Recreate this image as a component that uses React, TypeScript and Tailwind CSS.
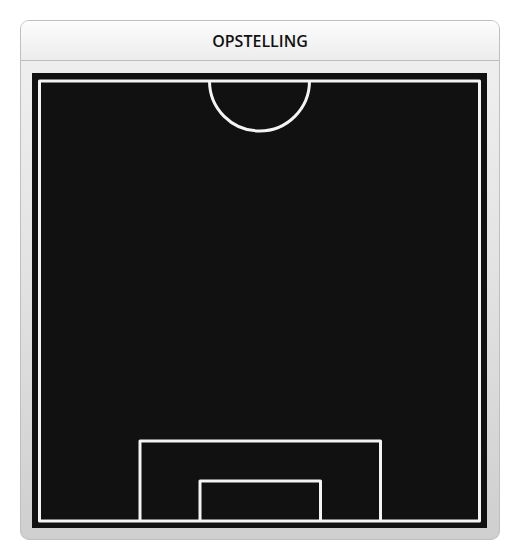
import React from 'react';

function Pitch() {
  return (
    <svg width="455" height="455" viewBox="0 0 455 455" className="block">
      <g fill="none" stroke="#f4f4f4" strokeWidth="3" strokeLinejoin="round">
        {/* outer lines */}
        <rect x="7.5" y="8" width="440" height="440" />
        {/* centre circle, lower half */}
        <path d="M177.5 8 A50 50 0 0 0 277.5 8" />
        {/* penalty area */}
        <path d="M108 448 V368 H348.5 V448" />
        {/* goal area */}
        <path d="M168 448 V408 H288.5 V448" />
      </g>
    </svg>
  );
}

export default function App() {
  return (
    <div className="w-[520px] h-[560px] bg-white pt-5 pl-5" style={{ fontFamily: '"Open Sans", "Liberation Sans", sans-serif' }}>
      <div className="w-[480px] h-[520px] rounded-[9px] border border-[#bfbfbf] overflow-hidden flex flex-col bg-gradient-to-b from-[#f1f1f1] via-[#e2e2e2] to-[#cfcfcf]">
        <div className="h-[40px] shrink-0 flex items-center justify-center border-b border-[#bcbcbc] bg-gradient-to-b from-[#fdfdfd] to-[#ececec]">
          <span className="text-[16px] font-semibold text-[#111] pt-[1px]">OPSTELLING</span>
        </div>
        <div className="flex-1 px-[11px] pt-[12px]">
          <div className="w-[455px] h-[455px] bg-[#111111]">
            <Pitch />
          </div>
        </div>
      </div>
    </div>
  );
}
